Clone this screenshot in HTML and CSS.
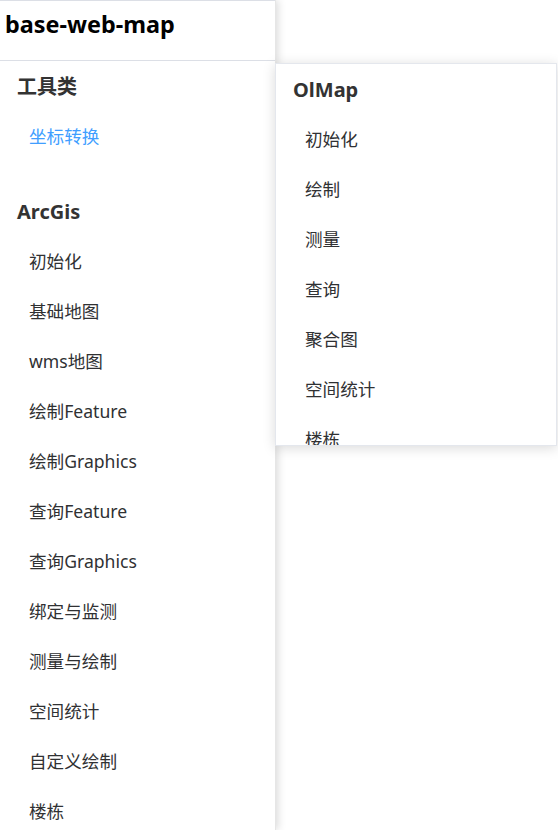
FILE: index.html
```html
<!DOCTYPE html>
<html lang="zh-CN">
<head>
  <meta charset="UTF-8">
  <meta name="viewport" content="width=device-width, initial-scale=1.0">
  <title>base-web-map</title>
  <link rel="stylesheet" href="styles.css">
</head>
<body>

  <aside class="sidebar">
    <div class="logo">base-web-map</div>

    <div class="group">
      <div class="group-title">工具类</div>
      <div class="item active">坐标转换</div>
    </div>

    <div class="group">
      <div class="group-title">ArcGis</div>
      <div class="item">初始化</div>
      <div class="item">基础地图</div>
      <div class="item">wms地图</div>
      <div class="item">绘制Feature</div>
      <div class="item">绘制Graphics</div>
      <div class="item">查询Feature</div>
      <div class="item">查询Graphics</div>
      <div class="item">绑定与监测</div>
      <div class="item">测量与绘制</div>
      <div class="item">空间统计</div>
      <div class="item">自定义绘制</div>
      <div class="item">楼栋</div>
    </div>
  </aside>

  <!-- popup submenu for OlMap -->
  <div class="popup">
    <div class="group-title">OlMap</div>
    <div class="item">初始化</div>
    <div class="item">绘制</div>
    <div class="item">测量</div>
    <div class="item">查询</div>
    <div class="item">聚合图</div>
    <div class="item">空间统计</div>
    <div class="item">楼栋</div>
  </div>

</body>
</html>
```

FILE: styles.css
```css
body {
  margin: 0;
  background: #fff;
  font-family: "Noto Sans", "Noto Sans CJK SC", sans-serif;
  color: #303133;
  height: 830px;
  overflow: hidden;
}

.sidebar {
  width: 276px;
  height: 100%;
  border-right: 1px solid #e6e6e6;
  box-shadow: 2px 0 8px rgba(0, 0, 0, 0.15);
  box-sizing: border-box;
}

.logo {
  height: 61px;
  box-sizing: border-box;
  border-top: 1px solid #dcdfe6;
  border-bottom: 1px solid #dcdfe6;
  padding: 7px 0 0 5px;
  font-size: 23.4px;
  font-weight: bold;
  color: #000;
  line-height: 32px;
}

.group {
  margin-bottom: 25px;
}

.group-title {
  height: 50px;
  line-height: 52px;
  padding-left: 17px;
  font-size: 20px;
  font-weight: bold;
  color: #333;
}

.item {
  height: 50px;
  line-height: 50px;
  padding-left: 29px;
  font-size: 17.6px;
  color: #303133;
  cursor: pointer;
}

.item.active {
  color: #409eff;
}

.popup {
  position: absolute;
  left: 275px;
  top: 63px;
  width: 282px;
  height: 383px;
  box-sizing: border-box;
  background: #fff;
  border: 1px solid #e4e7ed;
  box-shadow: 0 2px 12px rgba(0, 0, 0, 0.15);
  overflow: hidden;
}

.popup .group-title {
  padding-left: 17px;
}

.popup .item {
  padding-left: 29px;
}
```
